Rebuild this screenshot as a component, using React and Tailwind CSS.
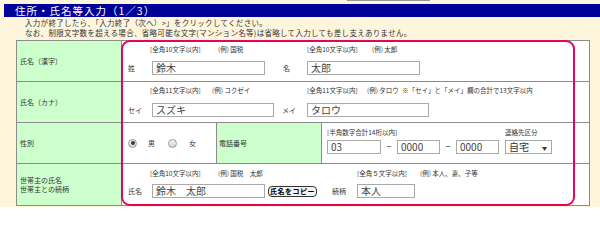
import React from "react";

const FONT = "font-['Noto_Sans_CJK_JP','Liberation_Sans',sans-serif]";

function Field({ value, w }) {
  return (
    <div
      className={`${w} h-[14px] border border-[#a9a9a9] bg-white pl-[3px] text-[10px] leading-[12px] text-[#444] whitespace-nowrap overflow-hidden`}
    >
      {value}
    </div>
  );
}

function Hint({ w, children }) {
  return <span className={`${w} shrink-0 whitespace-nowrap`}>{children}</span>;
}

function Radio({ checked }) {
  return (
    <span className="w-[9px] h-[9px] rounded-full border border-[#9a9a9a] bg-gradient-to-b from-[#f2f2f2] to-[#d6d6d6] flex items-center justify-center">
      {checked ? <span className="w-[4px] h-[4px] rounded-full bg-[#3a3a3a]" /> : null}
    </span>
  );
}

function LabelCell({ children }) {
  return (
    <div className="w-[105px] shrink-0 border-r border-[#8c8c8c] bg-[#ccffcc] pl-[3px] flex items-center text-[7px] leading-[9px] text-[#333]">
      {children}
    </div>
  );
}

export default function App() {
  return (
    <div className={`w-[600px] h-[207px] bg-[#fdf5dc] overflow-hidden ${FONT}`}>
      <div className="h-[4px]">
        <div className="ml-[347px] w-[83px] h-[1px] bg-[#9a9a9a]" />
      </div>

      <div className="ml-[4px] h-[13px] bg-[#000099] pl-[11px] flex items-center text-white text-[10.5px] leading-[13px] tracking-[1px]">
        住所・氏名等入力（1／3）
      </div>

      <div className="pt-[1px] pl-[25px] text-[7.5px] leading-[10px] text-[#333] tracking-[0.3px]">
        <p>入力が終了したら、「入力終了（次へ）&gt;」をクリックしてください。</p>
        <p>なお、制限文字数を超える場合、省略可能な文字(マンション名等)は省略して入力しても差し支えありません。</p>
      </div>

      <div className="relative mt-[2px] ml-[16px] w-[574px] border border-[#8c8c8c] bg-white text-[#333]">
        {/* 氏名（漢字） */}
        <div className="flex h-[41px] border-b border-[#8c8c8c]">
          <LabelCell>氏名（漢字）</LabelCell>
          <div className="flex-1 pt-[4px]">
            <div className="flex h-[10px] items-center pl-[28px] text-[6.5px]">
              <Hint w="w-[68px]">[全角10文字以内]</Hint>
              <Hint w="w-[89px]">(例) 国税</Hint>
              <Hint w="w-[65px]">[全角10文字以内]</Hint>
              <Hint w="">(例) 太郎</Hint>
            </div>
            <div className="mt-[6px] flex items-center text-[7px]">
              <span className="w-[30px] pl-[6px]">姓</span>
              <Field value="鈴木" w="w-[113px]" />
              <span className="w-[42px] pl-[18px]">名</span>
              <Field value="太郎" w="w-[113px]" />
            </div>
          </div>
        </div>

        {/* 氏名（カナ） */}
        <div className="flex h-[41px] border-b border-[#8c8c8c]">
          <LabelCell>氏名（カナ）</LabelCell>
          <div className="flex-1 pt-[4px]">
            <div className="flex h-[10px] items-center pl-[28px] text-[6.5px]">
              <Hint w="w-[62px]">[全角11文字以内]</Hint>
              <Hint w="w-[95px]">(例) コクゼイ</Hint>
              <Hint w="w-[60px]">[全角11文字以内]</Hint>
              <Hint w="w-[35px]">(例) タロウ</Hint>
              <Hint w="">※「セイ」と「メイ」欄の合計で13文字以内</Hint>
            </div>
            <div className="mt-[7px] flex items-center text-[7px]">
              <span className="w-[30px] pl-[6px]">セイ</span>
              <Field value="スズキ" w="w-[122px]" />
              <span className="w-[33px] pl-[8px]">メイ</span>
              <Field value="タロウ" w="w-[122px]" />
            </div>
          </div>
        </div>

        {/* 性別 / 電話番号 */}
        <div className="flex h-[41px] border-b border-[#8c8c8c]">
          <LabelCell>性別</LabelCell>
          <div className="w-[95px] shrink-0 border-r border-[#8c8c8c] pl-[6px] flex items-center text-[7px]">
            <Radio checked />
            <span className="ml-[11px]">男</span>
            <span className="ml-[13px]">
              <Radio />
            </span>
            <span className="ml-[12px]">女</span>
          </div>
          <div className="w-[105px] shrink-0 border-r border-[#8c8c8c] bg-[#ccffcc] pl-[2px] flex items-center text-[7px]">
            電話番号
          </div>
          <div className="flex-1 pt-[5px] pl-[5px]">
            <div className="flex h-[10px] items-center text-[6.5px]">
              <Hint w="w-[178px]">[半角数字合計14桁以内]</Hint>
              <Hint w="">連絡先区分</Hint>
            </div>
            <div className="mt-[2px] flex items-center text-[9px]">
              <Field value="03" w="w-[54px]" />
              <span className="w-[16px] text-center">−</span>
              <Field value="0000" w="w-[43px]" />
              <span className="w-[16px] text-center">−</span>
              <Field value="0000" w="w-[43px]" />
              <div className="ml-[6px] w-[47px] h-[14px] border border-[#a9a9a9] bg-white flex items-center justify-between pl-[3px] pr-[4px]">
                <span className="text-[10px] leading-[12px]">自宅</span>
                <span className="text-[5px] leading-[5px]">▼</span>
              </div>
            </div>
          </div>
        </div>

        {/* 世帯主 */}
        <div className="flex h-[41px]">
          <LabelCell>
            <span>
              世帯主の氏名
              <br />
              世帯主との続柄
            </span>
          </LabelCell>
          <div className="flex-1 pt-[5px]">
            <div className="flex h-[10px] items-center pl-[28px] text-[6.5px]">
              <Hint w="w-[68px]">[全角10文字以内]</Hint>
              <Hint w="w-[139px]">(例) 国税　太郎</Hint>
              <Hint w="w-[63px]">[全角５文字以内]</Hint>
              <Hint w="">(例) 本人、妻、子等</Hint>
            </div>
            <div className="mt-[5px] flex items-center text-[7px]">
              <span className="w-[30px] pl-[6px]">氏名</span>
              <Field value="鈴木　太郎" w="w-[113px]" />
              <button
                type="button"
                className="ml-[3px] w-[49px] h-[11px] rounded-[4px] border border-[#333] bg-[#f4f4f4] text-[7px] leading-[9px] font-bold text-black tracking-[0.5px]"
              >
                氏名をコピー
              </button>
              <span className="w-[40px] pl-[15px]">続柄</span>
              <Field value="本人" w="w-[58px]" />
            </div>
          </div>
        </div>

        <div className="pointer-events-none absolute left-[104px] top-[-1px] w-[454px] h-[166px] rounded-[9px] border-2 border-[#e4035f]" />
      </div>
    </div>
  );
}
